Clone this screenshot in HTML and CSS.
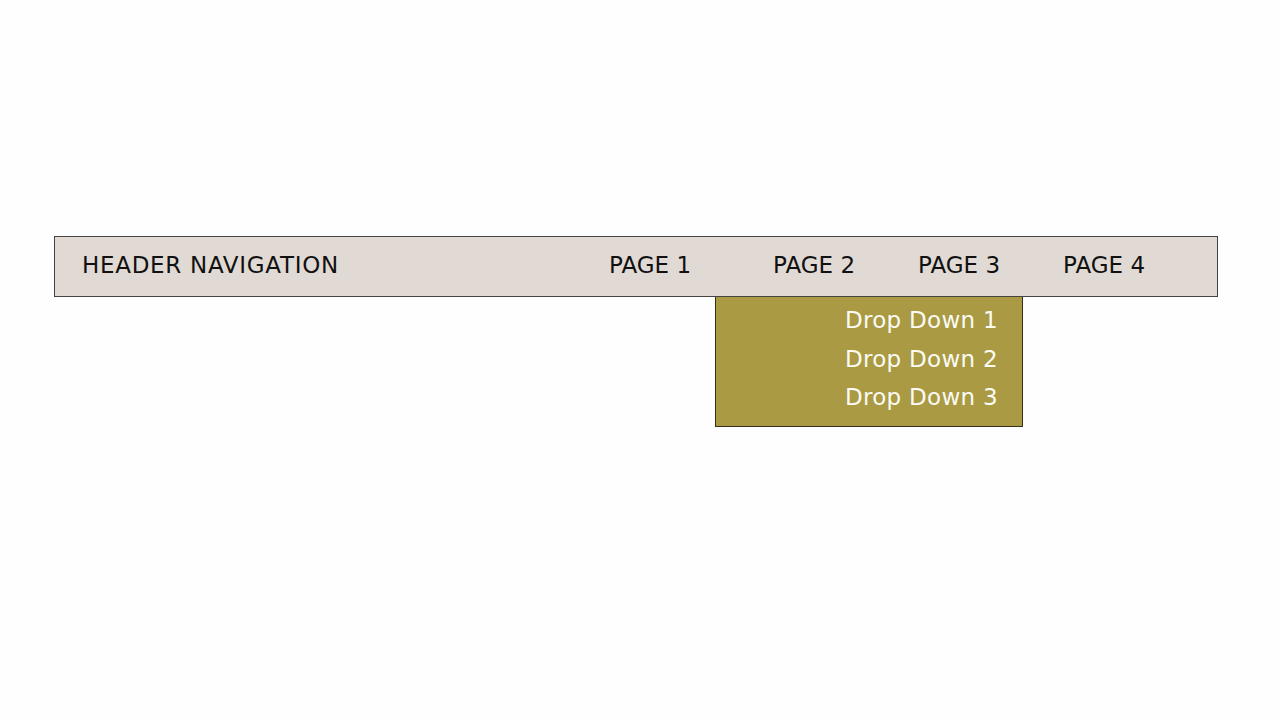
FILE: index.html
```html
<!DOCTYPE html>
<html>
<head>
<meta charset="utf-8">
<link rel="stylesheet" href="styles.css">
</head>
<body>
<div class="page">
  <header class="nav">
    <div class="brand">HEADER NAVIGATION</div>
    <ul class="menu">
      <li class="item item-1">PAGE 1</li>
      <li class="item item-2">PAGE 2
        <ul class="dropdown">
          <li>Drop Down 1</li>
          <li>Drop Down 2</li>
          <li>Drop Down 3</li>
        </ul>
      </li>
      <li class="item item-3">PAGE 3</li>
      <li class="item item-4">PAGE 4</li>
    </ul>
  </header>
</div>
</body>
</html>
```
FILE: styles.css
```css
html, body {
  margin: 0;
  padding: 0;
  background: #fefefe;
}
body {
  font-family: "DejaVu Sans", "Noto Sans", sans-serif;
  color: #111111;
}
.page {
  width: 1280px;
  height: 720px;
  padding-top: 236px;
  padding-left: 54px;
  box-sizing: border-box;
}
.nav {
  width: 1164px;
  height: 61px;
  box-sizing: border-box;
  border: 1px solid #454342;
  background: #e1dad4;
  display: flex;
  align-items: stretch;
  padding-left: 27px;
}
.brand {
  flex: 1;
  display: flex;
  align-items: center;
  font-size: 23px;
  letter-spacing: 0.7px;
  padding-bottom: 4px;
}
.menu {
  list-style: none;
  margin: 0;
  padding: 0;
  display: flex;
  width: 608px;
}
.item {
  position: relative;
  display: flex;
  align-items: center;
  font-size: 23px;
  padding-bottom: 4px;
  box-sizing: border-box;
}
.item-1 { width: 164px; }
.item-2 { width: 145px; }
.item-3 { width: 145px; }
.item-4 { flex: 1; }
.dropdown {
  position: absolute;
  left: -58px;
  top: calc(100% + 1px);
  width: 308px;
  box-sizing: border-box;
  margin: 0;
  list-style: none;
  background: #a99a43;
  border: 1px solid #34301c;
  border-top: none;
  padding: 4px 24px 9px 0;
  text-align: right;
  color: #fbfaf4;
  font-size: 23px;
  letter-spacing: 0.3px;
  line-height: 38.5px;
}
```
